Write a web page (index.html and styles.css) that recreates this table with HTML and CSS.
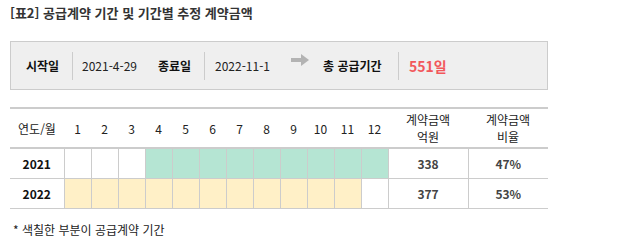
FILE: index.html
```html
<!DOCTYPE html>
<html lang="ko">
<head>
<meta charset="utf-8">
<link rel="stylesheet" href="styles.css">
</head>
<body>
<div class="page">
  <h2 class="title">[표2] 공급계약 기간 및 기간별 추정 계약금액</h2>
  <div class="summary">
    <span class="label l-start">시작일</span>
    <span class="sep"></span>
    <span class="value v-start">2021-4-29</span>
    <span class="label l-end">종료일</span>
    <span class="sep"></span>
    <span class="value v-end">2022-11-1</span>
    <svg class="arrow" width="18" height="12" viewBox="0 0 18 12"><rect x="0" y="4" width="11" height="4" fill="#b3b3b3"/><polygon points="10,0 18,6 10,12" fill="#b3b3b3"/></svg>
    <span class="label l-total">총 공급기간</span>
    <span class="sep"></span>
    <span class="total">551일</span>
  </div>
  <table class="grid">
    <colgroup>
      <col class="c-year">
      <col class="c-m"><col class="c-m"><col class="c-m"><col class="c-m"><col class="c-m"><col class="c-m">
      <col class="c-m"><col class="c-m"><col class="c-m"><col class="c-m"><col class="c-m"><col class="c-m">
      <col class="c-amt"><col class="c-amt">
    </colgroup>
    <thead>
      <tr>
        <th>연도/월</th>
        <th>1</th><th>2</th><th>3</th><th>4</th><th>5</th><th>6</th>
        <th>7</th><th>8</th><th>9</th><th>10</th><th>11</th><th>12</th>
        <th class="two">계약금액<br>억원</th>
        <th class="two">계약금액<br>비율</th>
      </tr>
    </thead>
    <tbody>
      <tr>
        <td class="year">2021</td>
        <td></td><td></td><td></td>
        <td class="g"></td><td class="g"></td><td class="g"></td><td class="g"></td><td class="g"></td>
        <td class="g"></td><td class="g"></td><td class="g"></td><td class="g"></td>
        <td class="num">338</td>
        <td class="num last">47%</td>
      </tr>
      <tr>
        <td class="year">2022</td>
        <td class="y"></td><td class="y"></td><td class="y"></td><td class="y"></td><td class="y"></td>
        <td class="y"></td><td class="y"></td><td class="y"></td><td class="y"></td><td class="y"></td>
        <td class="y"></td><td></td>
        <td class="num">377</td>
        <td class="num last">53%</td>
      </tr>
    </tbody>
  </table>
  <p class="note">* 색칠한 부분이 공급계약 기간</p>
</div>
</body>
</html>
```
FILE: styles.css
```css
html, body {
  margin: 0;
  padding: 0;
  background: #fff;
}
body {
  font-family: "Noto Sans CJK KR", "Noto Sans", sans-serif;
  color: #222;
}
.page {
  padding: 4px 10px 0 10px;
  width: 538px;
}
.title {
  margin: 0;
  font-size: 13px;
  line-height: 17px;
  font-weight: 700;
  color: #333;
}
.summary {
  margin-top: 20px;
  height: 47px;
  border: 1px solid #ccc;
  background: #efefef;
  display: flex;
  align-items: center;
  padding-left: 15px;
  font-size: 12px;
  line-height: 16px;
}
.label {
  font-weight: 700;
  color: #111;
}
.value {
  color: #222;
}
.sep {
  width: 1px;
  height: 28px;
  background: #ccc;
}
.l-start { width: 36px; margin-right: 10px; }
.v-start { width: 57px; margin-left: 9px; }
.l-end { width: 36px; margin-left: 19px; margin-right: 10px; }
.v-end { width: 56px; margin-left: 10px; }
.arrow { margin-left: 20px; margin-top: -12px; }
.l-total { width: 63px; margin-left: 14px; margin-right: 12px; white-space: nowrap; }
.total {
  margin-left: 10px;
  font-size: 14px;
  font-weight: 700;
  color: #f2575b;
}
.grid {
  margin-top: 17px;
  width: 538px;
  table-layout: fixed;
  border-collapse: collapse;
  border-top: 2px solid #ccc;
  font-size: 12px;
  line-height: 15px;
}
.c-year { width: 54px; }
.c-m { width: 27px; }
.c-amt { width: 80px; }
.grid th {
  height: 38px;
  padding: 0;
  font-weight: 400;
  color: #222;
  text-align: center;
  border-bottom: 2px solid #ccc;
}
.grid th.two { line-height: 17px; }
.grid td {
  height: 29px;
  padding: 0;
  text-align: center;
  border-right: 1px solid #ccc;
  border-bottom: 1px solid #ccc;
}
.grid td.last { border-right: none; }
.grid td.year {
  font-weight: 700;
  color: #111;
}
.grid td.num {
  font-weight: 700;
  color: #444;
}
.grid td.g { background: #b5e5d3; }
.grid td.y { background: #fff0c7; }
.note {
  margin: 13px 0 0 3px;
  font-size: 12px;
  line-height: 16px;
  color: #222;
}
```
